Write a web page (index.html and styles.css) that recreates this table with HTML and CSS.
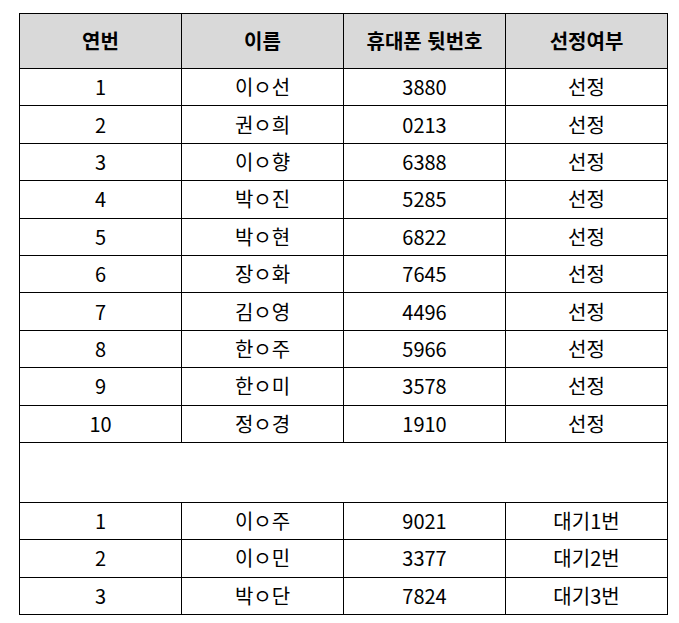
FILE: index.html
```html
<!DOCTYPE html>
<html lang="ko">
<head>
<meta charset="utf-8">
<link rel="stylesheet" href="styles.css">
</head>
<body>
<table class="list">
  <colgroup><col><col><col><col></colgroup>
  <thead>
    <tr class="head"><th>연번</th><th>이름</th><th>휴대폰 뒷번호</th><th>선정여부</th></tr>
  </thead>
  <tbody>
    <tr><td>1</td><td>이ㅇ선</td><td>3880</td><td>선정</td></tr>
    <tr><td>2</td><td>권ㅇ희</td><td>0213</td><td>선정</td></tr>
    <tr><td>3</td><td>이ㅇ향</td><td>6388</td><td>선정</td></tr>
    <tr><td>4</td><td>박ㅇ진</td><td>5285</td><td>선정</td></tr>
    <tr><td>5</td><td>박ㅇ현</td><td>6822</td><td>선정</td></tr>
    <tr><td>6</td><td>장ㅇ화</td><td>7645</td><td>선정</td></tr>
    <tr><td>7</td><td>김ㅇ영</td><td>4496</td><td>선정</td></tr>
    <tr><td>8</td><td>한ㅇ주</td><td>5966</td><td>선정</td></tr>
    <tr><td>9</td><td>한ㅇ미</td><td>3578</td><td>선정</td></tr>
    <tr><td>10</td><td>정ㅇ경</td><td>1910</td><td>선정</td></tr>
    <tr class="gap"><td colspan="4"></td></tr>
    <tr><td>1</td><td>이ㅇ주</td><td>9021</td><td>대기1번</td></tr>
    <tr><td>2</td><td>이ㅇ민</td><td>3377</td><td>대기2번</td></tr>
    <tr><td>3</td><td>박ㅇ단</td><td>7824</td><td>대기3번</td></tr>
  </tbody>
</table>
</body>
</html>
```
FILE: styles.css
```css
html, body {
  margin: 0;
  padding: 0;
  background: #fff;
}
body {
  padding: 13px 0 0 19px;
  font-family: "Noto Sans CJK KR", "Noto Sans", sans-serif;
  color: #000;
}
.list {
  border-collapse: collapse;
  table-layout: fixed;
  width: 649px;
}
.list col {
  width: 25%;
}
.list th,
.list td {
  border: 1px solid #000;
  padding: 0;
  text-align: center;
  vertical-align: middle;
  font-size: 20px;
  line-height: 1;
}
.list th {
  background: #d9d9d9;
  font-weight: 700;
  height: 54px;
}
.list td {
  height: 36.4px;
  font-weight: 400;
}
.list .gap td {
  height: 59px;
}
```
